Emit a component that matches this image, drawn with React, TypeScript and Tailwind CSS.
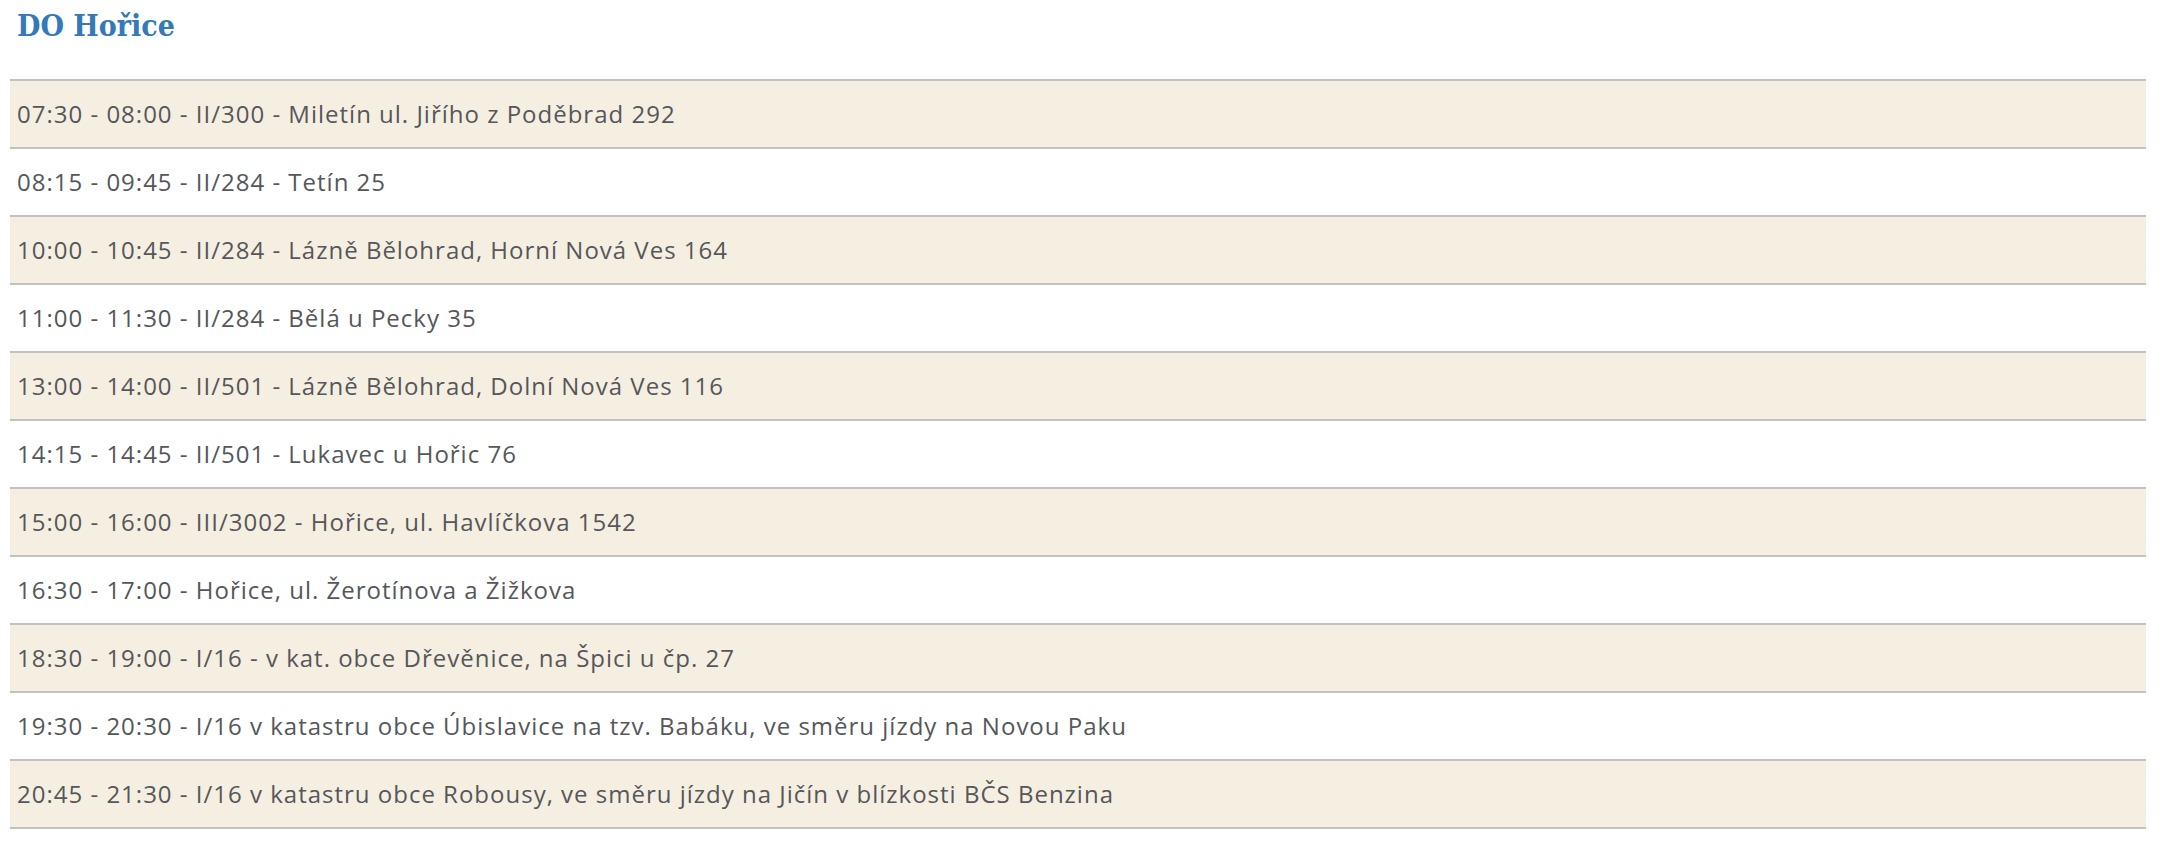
const rows = [
  "07:30 - 08:00 - II/300 - Miletín ul. Jiřího z Poděbrad 292",
  "08:15 - 09:45 - II/284 - Tetín 25",
  "10:00 - 10:45 - II/284 - Lázně Bělohrad, Horní Nová Ves 164",
  "11:00 - 11:30 - II/284 - Bělá u Pecky 35",
  "13:00 - 14:00 - II/501 - Lázně Bělohrad, Dolní Nová Ves 116",
  "14:15 - 14:45 - II/501 - Lukavec u Hořic 76",
  "15:00 - 16:00 - III/3002 - Hořice, ul. Havlíčkova 1542",
  "16:30 - 17:00 - Hořice, ul. Žerotínova a Žižkova",
  "18:30 - 19:00 - I/16 - v kat. obce Dřevěnice, na Špici u čp. 27",
  "19:30 - 20:30 - I/16 v katastru obce Úbislavice na tzv. Babáku, ve směru jízdy na Novou Paku",
  "20:45 - 21:30 - I/16 v katastru obce Robousy, ve směru jízdy na Jičín v blízkosti BČS Benzina",
];

export default function App() {
  return (
    <div className="bg-white min-h-[852px] px-[10px] pt-[6px] pr-[28px]">
      <h2 className="text-[30px] leading-[40px] font-bold text-[#337ab7] pl-[7px] font-['DejaVu_Serif_Condensed','DejaVu_Serif',serif]">
        DO Hořice
      </h2>
      <div className="mt-[33px] border-t-2 border-[#c2c2c2]">
        {rows.map((r, i) => (
          <div
            key={i}
            className={`h-[68px] border-b-2 border-[#c2c2c2] flex items-center pl-[7px] text-[24px] tracking-[1px] text-[#55575a] font-['Open_Sans',sans-serif] ${
              i % 2 === 0 ? "bg-[#f5efe2]" : "bg-white"
            }`}
          >
            {r}
          </div>
        ))}
      </div>
    </div>
  );
}
